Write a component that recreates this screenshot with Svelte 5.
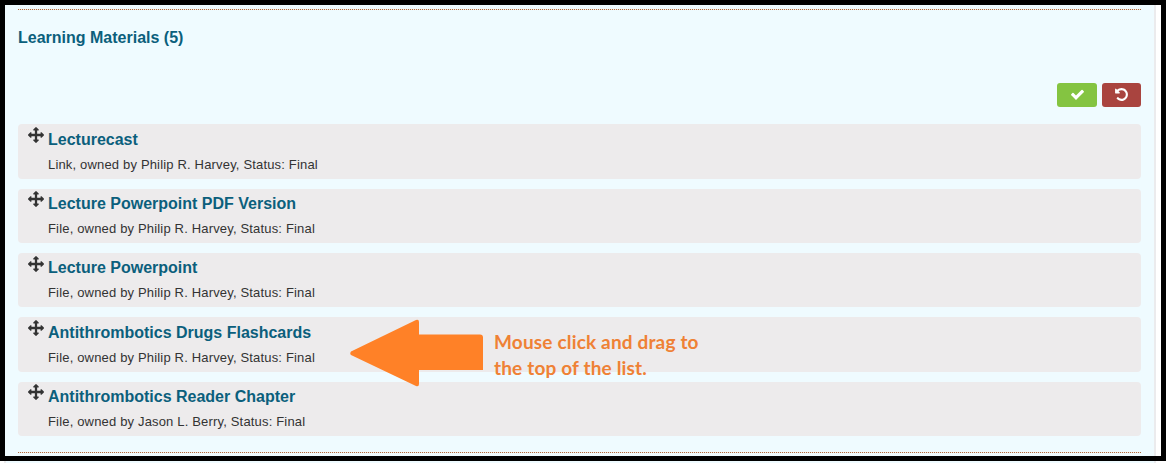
<script>
  const materials = [
    { title: 'Lecturecast', detail: 'Link, owned by Philip R. Harvey, Status: Final' },
    { title: 'Lecture Powerpoint PDF Version', detail: 'File, owned by Philip R. Harvey, Status: Final' },
    { title: 'Lecture Powerpoint', detail: 'File, owned by Philip R. Harvey, Status: Final' },
    { title: 'Antithrombotics Drugs Flashcards', detail: 'File, owned by Philip R. Harvey, Status: Final' },
    { title: 'Antithrombotics Reader Chapter', detail: 'File, owned by Jason L. Berry, Status: Final' }
  ];
</script>

<div class="frame">
  <main class="panel">
    <div class="rule"></div>
    <section>
      <h2>Learning Materials ({materials.length})</h2>
      <div class="actions">
        <button class="save" aria-label="Save order">
          <svg viewBox="0 0 1792 1792"><path d="M1671 566q0 40-28 68l-724 724-136 136q-28 28-68 28t-68-28l-136-136-362-362q-28-28-28-68t28-68l136-136q28-28 68-28t68 28l294 295 656-657q28-28 68-28t68 28l136 136q28 28 28 68z" /></svg>
        </button>
        <button class="undo" aria-label="Cancel">
          <svg viewBox="0 0 1792 1792"><path d="M1664 896q0 156-61 298t-164 245-245 164-298 61q-172 0-327-72.5t-264-204.5q-7-10-6.5-22.5t8.5-20.5l137-138q10-9 25-9 16 2 23 12 73 95 179 147t225 52q104 0 198.5-40.5t163.5-109.5 109.5-163.5 40.5-198.5-40.5-198.5-109.5-163.5-163.5-109.5-198.5-40.5q-98 0-188 35.5t-160 101.5l137 138q31 30 14 69-17 40-59 40h-448q-26 0-45-19t-19-45v-448q0-42 40-59 39-17 69 14l130 129q107-101 244.5-156.5t284.5-55.5q156 0 298 61t245 164 164 245 61 298z" /></svg>
        </button>
      </div>
      <ul>
        {#each materials as item}
          <li>
            <svg class="move" viewBox="0 0 1792 1792"><path d="M1792 896q0 26-19 45l-256 256q-19 19-45 19t-45-19-19-45v-128h-384v384h128q26 0 45 19t19 45-19 45l-256 256q-19 19-45 19t-45-19l-256-256q-19-19-19-45t19-45 45-19h128v-384h-384v128q0 26-19 45t-45 19-45-19l-256-256q-19-19-19-45t19-45l256-256q19-19 45-19t45 19 19 45v128h384v-384h-128q-26 0-45-19t-19-45 19-45l256-256q19-19 45-19t45 19l256 256q19 19 19 45t-19 45-45 19h-128v384h384v-128q0-26 19-45t45-19 45 19l256 256q19 19 19 45z" /></svg>
            <div>
              <h3>{item.title}</h3>
              <p>{item.detail}</p>
            </div>
          </li>
        {/each}
      </ul>
    </section>
    <div class="rule"></div>
  </main>
  <div class="callout">
    <svg viewBox="0 0 134 68"><path d="M1 32.5 66 1Q69 0 69 3V15.500H130Q133 15.500 133 18.500V51H69V65Q69 68 66 67L1 36Q-.5 34.500 1 32.500Z" /></svg>
    <p>Mouse click and drag to<br />the top of the list.</p>
  </div>
</div>
<div class="below"></div>

<style>
  :global(body) { background: #fff; }
  .frame {
    position: relative;
    box-sizing: border-box;
    width: 1166px;
    height: 461px;
    border: 5px solid #000;
    font-family: 'Liberation Sans', Arial, sans-serif;
    background: #fff;
  }
  .panel {
    box-sizing: border-box;
    width: 1151px;
    height: 451px;
    padding: 4px 13px 0;
    background: #effbff;
    border-right: 2px solid #ebebed;
  }
  .below {
    box-sizing: border-box;
    width: 1152px;
    height: 2px;
    margin-left: 4px;
    background: #effbff;
    border: solid #ebebed;
    border-width: 0 2px;
  }
  .rule {
    width: 1123px;
    height: 1px;
    background: repeating-linear-gradient(90deg, #ab6a42 0 1px, #f6e9dc 1px 2px);
  }
  section { width: 1123px; height: 442px; }
  h2, h3, p, ul { margin: 0; padding: 0; }
  h2, h3 { font-size: 16px; font-weight: 700; color: #0b5f7c; white-space: nowrap; }
  h2 { padding-top: 18px; line-height: 20px; }
  .actions { display: flex; justify-content: flex-end; gap: 5px; margin-top: 35px; }
  button {
    display: flex;
    justify-content: center;
    align-items: flex-start;
    height: 24px;
    padding: 4px 0 0;
    border: 0;
    border-radius: 3px;
  }
  button svg { width: 15px; height: 15px; fill: #fff; }
  .save { width: 40px; background: #84c441; }
  .undo { width: 39px; background: #a9443f; }
  ul { display: grid; gap: 10px; margin-top: 17.2px; list-style: none; }
  li {
    display: flex;
    box-sizing: border-box;
    height: 54.4px;
    padding-left: 10px;
    border-radius: 4px;
    background: #edebec;
  }
  .move { width: 16px; height: 16px; margin: 2.7px 4px 0 0; fill: #333; }
  h3 { padding-top: 5.35px; line-height: 20px; }
  li p { margin-top: 7px; font-size: 13px; line-height: 16px; letter-spacing: 0.17px; color: #333; white-space: nowrap; }
  .callout { position: absolute; left: 345px; top: 314px; display: flex; }
  .callout svg { width: 134px; height: 68px; fill: #ff8127; }
  .callout p {
    margin: 10px 0 0 10px;
    font: 700 19px/26px Lato, sans-serif;
    letter-spacing: 0.17px;
    color: #ef8135;
    white-space: nowrap;
  }
</style>
